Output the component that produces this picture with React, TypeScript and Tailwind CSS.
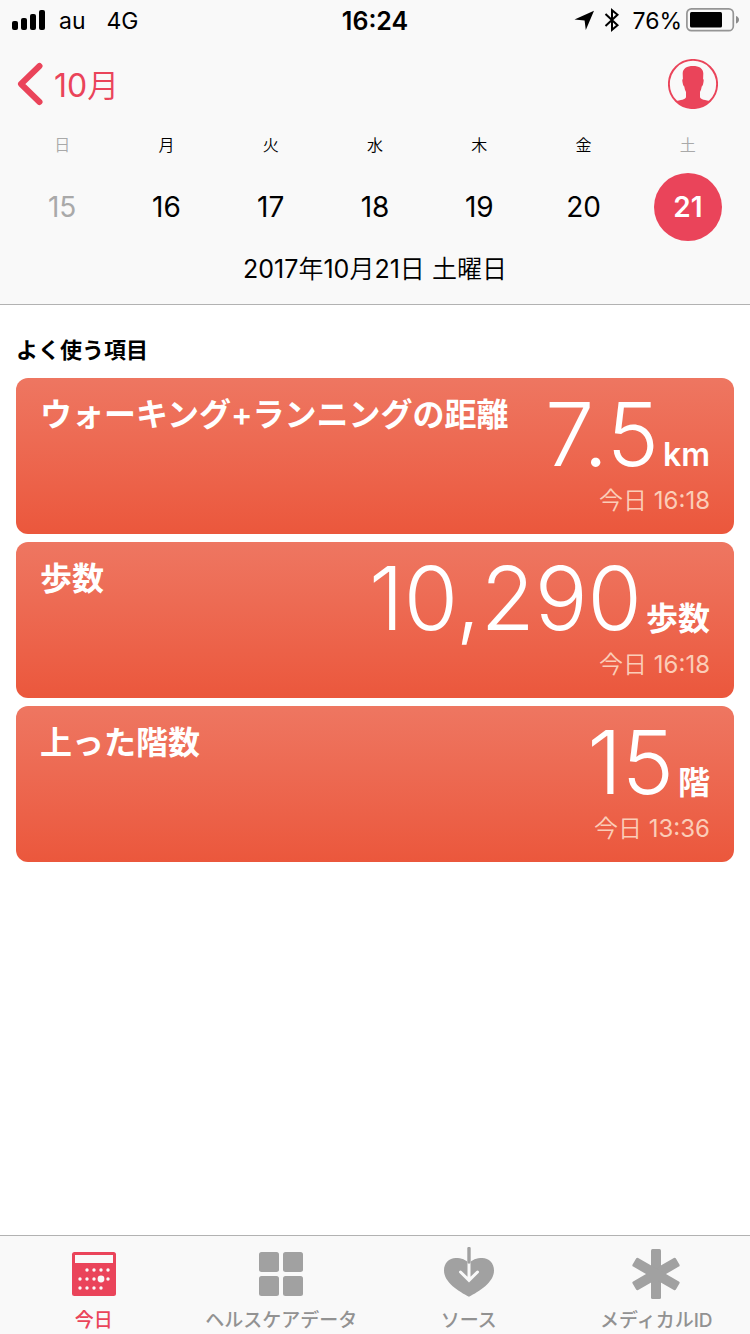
import type { ReactNode } from "react";

type Day = { name: string; date: number; weekend?: boolean; selected?: boolean };
type Metric = { label: string; value: string; unit: string; time: string };
type Tab = { label: string; icon: ReactNode; active?: boolean };

const days: Day[] = [
  { name: "日", date: 15, weekend: true },
  { name: "月", date: 16 },
  { name: "火", date: 17 },
  { name: "水", date: 18 },
  { name: "木", date: 19 },
  { name: "金", date: 20 },
  { name: "土", date: 21, weekend: true, selected: true },
];

const metrics: Metric[] = [
  { label: "ウォーキング+ランニングの距離", value: "7.5", unit: "km", time: "16:18" },
  { label: "歩数", value: "10,290", unit: "歩数", time: "16:18" },
  { label: "上った階数", value: "15", unit: "階", time: "13:36" },
];

function SignalIcon() {
  return (
    <svg width="34" height="20" viewBox="0 0 34 20" fill="currentColor" aria-hidden="true">
      <rect x="0" y="11" width="6" height="9" rx="2" />
      <rect x="9" y="8" width="6" height="12" rx="2" />
      <rect x="18" y="4" width="6" height="16" rx="2" />
      <rect x="27" y="0" width="6" height="20" rx="2" />
    </svg>
  );
}

function LocationIcon() {
  return (
    <svg width="20" height="20" viewBox="0 0 20 20" fill="currentColor" aria-hidden="true">
      <path d="M20 0.8 11.800 20 10.600 10.400 0.500 9.500Z" />
    </svg>
  );
}

function BluetoothIcon() {
  return (
    <svg width="16" height="24" viewBox="0 0 16 24" fill="none" stroke="currentColor" strokeWidth="2" aria-hidden="true">
      <path d="M1.500 6 13.500 17.200 8 21.800V2.200L13.500 6.800 1.500 18" />
    </svg>
  );
}

function BatteryIcon() {
  return (
    <svg width="54" height="24" viewBox="0 0 54 24" aria-hidden="true">
      <rect x="0.9" y="0.9" width="46.4" height="21.8" rx="4.5" fill="none" stroke="#959595" strokeWidth="1.7" />
      <rect x="4" y="4" width="32" height="15.5" rx="1.5" fill="#000" />
      <path d="M50 8c1.800.6 3 2 3 3.800s-1.200 3.200-3 3.800Z" fill="#8b8b8b" />
    </svg>
  );
}

function ProfileIcon() {
  return (
    <svg width="50" height="50" viewBox="0 0 50 50" aria-hidden="true">
      <circle cx="25" cy="25" r="24.100" fill="none" stroke="#ea445a" strokeWidth="1.900" />
      <path
        d="M25 7c6 0 10.300 2.400 10.300 7.500L35.100 20c.9.300.7 2.200 0 5-.3 1.300-.8 2.200-1.400 2.500-.4 2.500-.9 4-1.700 5.500V38c.4 2 2.500 2.600 9.500 4C37.300 46.700 31.500 49.500 25 49.500S12.700 46.700 8.500 42c7-1.400 9.100-2 9.500-4V33c-.8-1.500-1.300-3-1.700-5.500-.6-.3-1.100-1.200-1.400-2.500-.7-2.800-.9-4.700 0-5L14.700 14.500C14.700 9.400 19 7 25 7Z"
        fill="#ea445a"
      />
    </svg>
  );
}

const tabs: Tab[] = [
  {
    label: "今日",
    active: true,
    icon: (
      <svg width="50" height="52" viewBox="0 0 50 52" aria-hidden="true">
        <rect x="3" y="5" width="44" height="44" rx="2.500" fill="currentColor" />
        <g fill="#f9f9f9">
          <rect x="6" y="8" width="38" height="8" />
          <circle cx="18" cy="23" r="1.700" />
          <circle cx="25" cy="23" r="1.700" />
          <circle cx="32" cy="23" r="1.700" />
          <circle cx="39" cy="23" r="1.700" />
          <circle cx="11" cy="32" r="1.700" />
          <circle cx="18" cy="32" r="1.700" />
          <circle cx="25" cy="32" r="1.700" />
          <circle cx="32" cy="32" r="3.400" />
          <circle cx="39" cy="32" r="1.700" />
          <circle cx="11" cy="41" r="1.700" />
          <circle cx="18" cy="41" r="1.700" />
          <circle cx="25" cy="41" r="1.700" />
          <circle cx="32" cy="41" r="1.700" />
        </g>
      </svg>
    ),
  },
  {
    label: "ヘルスケアデータ",
    icon: (
      <svg width="50" height="52" viewBox="0 0 50 52" fill="#a1a1a1" aria-hidden="true">
        <rect x="3" y="5" width="20" height="20" rx="2.500" />
        <rect x="27" y="5" width="20" height="20" rx="2.500" />
        <rect x="3" y="29" width="20" height="20" rx="2.500" />
        <rect x="27" y="29" width="20" height="20" rx="2.500" />
      </svg>
    ),
  },
  {
    label: "ソース",
    icon: (
      <svg width="50" height="52" viewBox="0 0 50 52" aria-hidden="true">
        <path
          d="M25 49.700C15 44.500 0 35.500 0 23.500 0 16 5 11 11.800 11c5.500 0 10.500 1.800 13.200 5.500C27.700 12.800 32.700 11 38.200 11 45 11 50 16 50 23.500c0 12-15 21-25 26.200Z"
          fill="#a1a1a1"
        />
        <path d="M25 10v22M16.500 25 25 33.300 33.500 25" fill="none" stroke="#f9f9f9" strokeWidth="3" strokeLinecap="round" />
        <path d="M25 1.500V15" stroke="#a1a1a1" strokeWidth="3.400" strokeLinecap="round" />
      </svg>
    ),
  },
  {
    label: "メディカルID",
    icon: (
      <svg width="50" height="52" viewBox="0 0 50 52" fill="#a1a1a1" aria-hidden="true">
        <rect x="20" y="2" width="10" height="50" rx="1.500" />
        <rect x="20" y="2" width="10" height="50" rx="1.500" transform="rotate(60 25 27)" />
        <rect x="20" y="2" width="10" height="50" rx="1.500" transform="rotate(-60 25 27)" />
      </svg>
    ),
  },
];

function StatusBar() {
  return (
    <div className="grid h-10 grid-cols-3 items-center text-[23px] leading-6">
      <div className="flex items-center pl-3">
        <SignalIcon />
        <span className="ml-[13px] pt-px">au</span>
        <span className="ml-[21px] pt-px">4G</span>
      </div>
      <time className="pt-px text-center text-[25px] font-semibold">16:24</time>
      <div className="flex items-center justify-end pr-[14px]">
        <LocationIcon />
        <span className="ml-[10px]">
          <BluetoothIcon />
        </span>
        <span className="mr-2 ml-3 pt-px">76%</span>
        <span className="-mx-1">
          <BatteryIcon />
        </span>
      </div>
    </div>
  );
}

function MetricCard({ label, value, unit, time }: Metric) {
  return (
    <button
      type="button"
      className="flex h-[156px] w-full items-start justify-between rounded-xl bg-linear-to-b from-[#ee7661] to-[#eb573c] px-6 pt-4 text-left text-white"
    >
      <span className="text-[32px] leading-[42px] font-semibold whitespace-nowrap">{label}</span>
      <span className="flex flex-col items-end">
        <span className="flex items-baseline gap-1">
          <span className="text-[88px] leading-[80px] font-light">{value}</span>
          <span className="text-[32px] leading-10 font-semibold">{unit}</span>
        </span>
        <span className="mt-[10px] text-[24px] leading-8 text-[#fbcdb8]">
          <span className="font-[350]">今日</span> {time}
        </span>
      </span>
    </button>
  );
}

export default function App() {
  return (
    <div className="flex min-h-screen flex-col bg-white font-['Inter','Noto_Sans_CJK_JP',sans-serif] text-black" lang="ja">
      <header className="border-b border-[#b2b2b2] bg-[#f9f9f9] pb-[15px]">
        <StatusBar />
        <div className="flex h-[88px] items-center justify-between pr-8 pl-4">
          <button type="button" className="flex items-center gap-[10px] text-[32px] leading-none text-[#ea445a]">
            <svg width="28" height="44" viewBox="0 0 28 44" fill="none" stroke="currentColor" strokeWidth="6" strokeLinecap="round" strokeLinejoin="round" aria-hidden="true">
              <path d="M23.500 4 5 22 23.500 40" />
            </svg>
            <span className="pt-[3px]">
              10<span className="font-[350]">月</span>
            </span>
          </button>
          <button type="button" aria-label="プロフィール">
            <ProfileIcon />
          </button>
        </div>
        <div className="mt-px grid grid-cols-7 px-[10px]">
          {days.map((day) => (
            <button key={day.date} type="button" className="flex flex-col items-center">
              <span className={day.weekend ? "text-[16px] leading-8 font-[350] text-[#a9a9a9]" : "text-[16px] leading-8 font-[350]"}>{day.name}</span>
              <span
                className={
                  day.selected
                    ? "mt-3 flex size-[68px] items-center justify-center rounded-full bg-[#ea445a] text-[28px] font-semibold text-white"
                    : day.weekend
                      ? "mt-3 flex size-[68px] items-center justify-center text-[28px] text-[#a9a9a9]"
                      : "mt-3 flex size-[68px] items-center justify-center text-[28px]"
                }
              >
                {day.date}
              </span>
            </button>
          ))}
        </div>
        <p className="mt-2 text-center text-[25px] leading-10">
          2017<span className="font-[350]">年</span>10<span className="font-[350]">月</span>21
          <span className="font-[350]">日 土曜日</span>
        </p>
      </header>

      <main className="flex-1 px-4 pt-[25px]">
        <h2 className="text-[22px] leading-10 font-bold">よく使う項目</h2>
        <div className="mt-2 flex flex-col gap-2">
          {metrics.map((metric) => (
            <MetricCard key={metric.label} {...metric} />
          ))}
        </div>
      </main>

      <nav className="grid grid-cols-4 border-t border-[#b2b2b2] bg-[#f9f9f9] pt-[11px]">
        {tabs.map((tab) => (
          <a
            key={tab.label}
            href="#"
            className={
              tab.active
                ? "flex flex-col items-center text-[19px] leading-[26px] font-medium text-[#ea445a]"
                : "flex flex-col items-center text-[19px] leading-[26px] font-medium text-[#929292]"
            }
          >
            {tab.icon}
            <span className="mt-[9px]">{tab.label}</span>
          </a>
        ))}
      </nav>
    </div>
  );
}
